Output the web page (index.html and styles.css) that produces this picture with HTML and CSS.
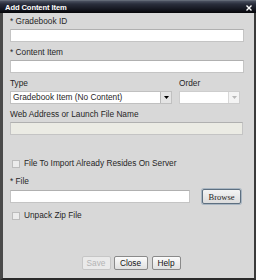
FILE: index.html
```html
<!DOCTYPE html>
<html>
<head>
<meta charset="utf-8">
<link rel="stylesheet" href="styles.css">
</head>
<body>
<div class="window">
  <div class="titlebar">
    <span class="title">Add Content Item</span>
    <span class="close-btn"><svg width="6" height="6" viewBox="0 0 6 6"><path d="M0.5 0.5L5.5 5.5M5.5 0.5L0.5 5.5" stroke="#fff" stroke-width="1.4"/></svg></span>
  </div>
  <div class="body">
    <div class="label">* Gradebook ID</div>
    <div class="input"></div>
    <div class="label gap">* Content Item</div>
    <div class="input"></div>
    <div class="row gap">
      <div class="col-type">
        <div class="label">Type</div>
        <div class="select">
          <span class="select-text">Gradebook Item (No Content)</span>
          <span class="arrow"><svg width="5" height="3" viewBox="0 0 5 3"><path d="M0 0H5L2.5 3Z" fill="#000"/></svg></span>
        </div>
      </div>
      <div class="col-order">
        <div class="label">Order</div>
        <div class="select disabled">
          <span class="select-text"></span>
          <span class="arrow"><svg width="5" height="3" viewBox="0 0 5 3"><path d="M0 0H5L2.5 3Z" fill="#b8b8b8"/></svg></span>
        </div>
      </div>
    </div>
    <div class="label gap">Web Address or Launch File Name</div>
    <div class="input disabled-input"></div>
    <label class="check check-server"><span class="box"></span>File To Import Already Resides On Server</label>
    <div class="label file-label">* File</div>
    <div class="file-row">
      <div class="input file-input"></div>
      <button class="browse">Browse</button>
    </div>
    <label class="check check-zip"><span class="box"></span>Unpack Zip File</label>
    <div class="spacer"></div>
    <div class="buttons">
      <button class="btn btn-save btn-disabled">Save</button>
      <button class="btn btn-close">Close</button>
      <button class="btn btn-help">Help</button>
    </div>
  </div>
</div>
</body>
</html>
```

FILE: styles.css
```css
html, body {
  margin: 0;
  padding: 0;
}
body {
  width: 256px;
  height: 280px;
  overflow: hidden;
  font-family: "Liberation Sans", Arial, sans-serif;
  font-size: 8.3px;
  color: #262626;
}
.window {
  width: 256px;
  height: 280px;
  display: flex;
  flex-direction: column;
}
.titlebar {
  height: 13px;
  flex: none;
  position: relative;
  background: linear-gradient(#7a828c 0px, #4a5060 1px, #2a2e3c 4px, #161822 9px, #050508 13px);
  display: flex;
  align-items: center;
}
.title {
  color: #fff;
  font-weight: bold;
  font-size: 7.6px;
  line-height: 13px;
  padding-left: 5px;
  padding-top: 1px;
  letter-spacing: -0.1px;
}
.close-btn {
  position: absolute;
  right: 4px;
  top: 5px;
  width: 6px;
  height: 6px;
  display: flex;
}
.body {
  flex: 1;
  background: #d8d8d8;
  border-left: 3px solid #4a4a4a;
  border-right: 2px solid #3a3a3a;
  border-bottom: 2px solid #2a2a2a;
  padding: 3px 10px 0 7px;
  display: flex;
  flex-direction: column;
}
.label {
  line-height: 11px;
  height: 11px;
  margin-bottom: 2px;
  white-space: nowrap;
}
.gap {
  margin-top: 5px;
}
.input {
  height: 11px;
  background: #fff;
  border: 1px solid #c4c4c4;
  border-top-color: #b0b0b0;
}
.row {
  display: flex;
}
.col-type {
  width: 162px;
}
.col-order {
  margin-left: 7px;
  width: 61px;
}
.select {
  height: 11px;
  background: #fff;
  border: 1px solid #c0c0c0;
  display: flex;
  align-items: stretch;
}
.select-text {
  flex: 1;
  line-height: 11px;
  padding-left: 2px;
  white-space: nowrap;
  overflow: hidden;
}
.arrow {
  width: 10px;
  background: #e4e4e4;
  border-left: 1px solid #b8b8b8;
  display: flex;
  align-items: center;
  justify-content: center;
}
.select.disabled .arrow {
  background: #f4f4f4;
  border-left-color: #d8d8d8;
}
.select.disabled {
  border-color: #cdcdcd;
}
.disabled-input {
  background: #ebebe4;
  margin-right: 1px;
}
.check {
  display: flex;
  align-items: center;
  line-height: 11px;
  white-space: nowrap;
}
.check-server {
  margin-top: 23px;
}
.check-zip {
  margin-top: 6px;
}
.box {
  width: 6px;
  height: 6px;
  border: 1px solid #bcbcbc;
  background: #ececec;
  margin-left: 2px;
  margin-right: 4px;
}
.file-label {
  margin-top: 7px;
}
.file-row {
  display: flex;
  align-items: center;
}
.file-input {
  width: 178px;
}
.browse {
  margin-left: 12px;
  width: 39px;
  height: 15px;
  padding: 0;
  font-family: "Liberation Serif", "Times New Roman", serif;
  font-size: 8.5px;
  color: #222;
  background: linear-gradient(#f4f4f4, #dcdcdc);
  border: 1px solid #5d6f80;
  border-radius: 2px;
  box-shadow: 0 0 0 1px #a9b6c2;
}
.spacer {
  flex: 1;
}
.buttons {
  display: flex;
  justify-content: center;
  margin-bottom: 8px;
  padding-left: 8px;
}
.btn {
  height: 14px;
  padding: 0;
  font-family: "Liberation Sans", Arial, sans-serif;
  font-size: 8.3px;
  color: #111;
  background: linear-gradient(#fbfbfb, #e0e0e0);
  border: 1px solid #8a8a8a;
  border-radius: 2px;
}
.btn-save {
  width: 29px;
}
.btn-close {
  width: 34px;
  margin-left: 3px;
}
.btn-help {
  width: 29px;
  margin-left: 4px;
}
.btn-disabled {
  color: #b4b4b4;
  border-color: #c6c6c6;
  background: #eaeaea;
}
```
